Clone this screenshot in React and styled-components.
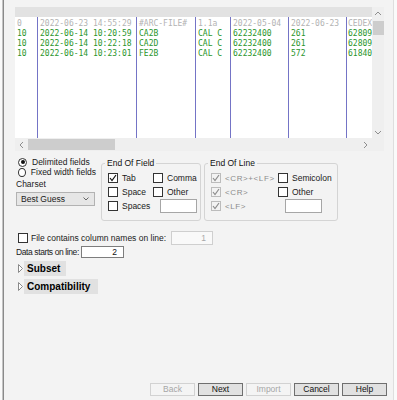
import React from "react";
import styled, { createGlobalStyle } from "styled-components";

const GlobalStyle = createGlobalStyle`
  html, body { margin: 0; padding: 0; background: #fafafa; }
  body {
    font-family: "Liberation Sans", Arial, sans-serif;
    font-size: 8.5px;
    color: #1a1a1a;
  }
  * { box-sizing: border-box; }
`;

// Dialog frame
const Window = styled.div`
  width: 392px;
  height: 400px;
  margin-left: 2px;
  border-left: 1px solid #c4c4c4;
  border-right: 1px solid #dedede;
  box-shadow: inset 1px 0 #8a8a8a;
  background: #f3f3f3;
  padding: 7px 9px 4px 12px;
  display: flex;
  flex-direction: column;
`;

// Preview grid
const Grid = styled.div`
  width: 369px;
  height: 144px;
  display: flex;
  flex-direction: column;
  flex: none;
`;

const GridTop = styled.div`
  display: flex;
  height: 131px;
`;

const Table = styled.div`
  flex: 1;
  display: flex;
  flex-direction: column;
  min-width: 0;
`;

const HeaderStrip = styled.div`
  height: 10px;
  background: #e2e2e2;
`;

const Columns = styled.div`
  flex: 1;
  display: flex;
  background: #fff;
  overflow: hidden;
`;

const Column = styled.div`
  width: ${(p) => (p.$w ? `${p.$w}px` : "auto")};
  flex: ${(p) => (p.$w ? "none" : "1")};
  min-width: 0;
  border-left: ${(p) => (p.$first ? "none" : "1px solid #7474c6")};
  padding: 2px 0 0 ${(p) => (p.$w ? 2 : 1)}px;
  overflow: hidden;
  font-family: "DejaVu Sans Mono", "Liberation Mono", monospace;
  font-size: 8px;
  line-height: 10px;
  white-space: nowrap;
`;

const Cell = styled.div`
  color: ${(p) => (p.$head ? "#b3b3b3" : "#2a952a")};
`;

const VScroll = styled.div`
  width: 12px;
  background: #efefef;
  display: flex;
  flex-direction: column;
  align-items: flex-end;
`;

const ArrowBox = styled.div`
  width: ${(p) => p.$w || 12}px;
  height: ${(p) => p.$h || 12}px;
  flex: none;
  display: flex;
  align-items: center;
  justify-content: center;
`;

const VThumb = styled.div`
  width: 11px;
  height: 14px;
  margin-top: 1px;
  background: #cdcdcd;
`;

const Fill = styled.div`
  flex: 1;
`;

const HScroll = styled.div`
  height: 13px;
  display: flex;
  align-items: center;
  background: #efefef;
`;

const HThumb = styled.div`
  width: 87px;
  height: 11px;
  background: #cdcdcd;
`;

const Corner = styled.div`
  width: 12px;
  align-self: stretch;
  background: #efefef;
`;

// Options
const OptionsRow = styled.div`
  display: flex;
  align-items: flex-start;
  margin: 6px 0 0 1px;
`;

const LeftCol = styled.div`
  width: 80px;
  display: flex;
  flex-direction: column;
`;

const RadioRow = styled.label`
  height: 10px;
  display: flex;
  align-items: center;
  gap: 5px;
  padding-left: 2px;
  white-space: nowrap;
`;

const Radio = styled.span`
  width: 9px;
  height: 9px;
  border: 1px solid #333;
  border-radius: 50%;
  background: #fff;
  display: flex;
  align-items: center;
  justify-content: center;
  &::after {
    content: "";
    width: 4px;
    height: 4px;
    border-radius: 50%;
    background: ${(p) => (p.$on ? "#111" : "transparent")};
  }
`;

const Caption = styled.div`
  margin-top: 2px;
  height: 10px;
  line-height: 10px;
`;

const Select = styled.div`
  margin-top: 3px;
  width: 79px;
  height: 14px;
  background: #e6e6e6;
  border: 1px solid #b2b2b2;
  display: flex;
  align-items: center;
  justify-content: space-between;
  padding: 0 5px 0 4px;
`;

const Group = styled.fieldset`
  width: ${(p) => p.$w}px;
  margin: 1px 0 0 ${(p) => p.$ml}px;
  padding: 3px 6px 7px 6px;
  border: 1px solid #d4d4d4;
  border-radius: 3px;
  min-width: 0;
`;

const Legend = styled.legend`
  padding: 0 2px;
  margin-left: -3px;
  line-height: 10px;
  color: #111;
`;

const CheckGrid = styled.div`
  display: grid;
  grid-template-columns: ${(p) => p.$col}px auto;
  grid-auto-rows: 14px;
`;

const CheckRow = styled.label`
  display: flex;
  align-items: center;
  gap: 4px;
  white-space: nowrap;
  color: ${(p) => (p.$off ? "#8c8c8c" : "inherit")};
`;

const Box = styled.span`
  width: 10px;
  height: 10px;
  flex: none;
  border: 1px solid ${(p) => (p.$off ? "#bcbcbc" : "#333")};
  background: ${(p) => (p.$off ? "#f3f3f3" : "#fff")};
  display: flex;
  align-items: center;
  justify-content: center;
`;

const Marker = styled.span`
  font-size: 8px;
  letter-spacing: 0.6px;
`;

const Field = styled.div`
  width: ${(p) => p.$w}px;
  height: ${(p) => p.$h || 14}px;
  margin-left: ${(p) => p.$ml || 0}px;
  flex: none;
  background: ${(p) => (p.$off ? "#f9f9f9" : "#fff")};
  border: 1px solid ${(p) => (p.$off ? "#cfcfcf" : p.$dark ? "#7d7d7d" : "#a6a6a6")};
  color: ${(p) => (p.$off ? "#a8a8a8" : "#111")};
  text-align: right;
  padding-right: 6px;
  line-height: ${(p) => (p.$h || 14) - 2}px;
  align-self: center;
`;

const LineRow = styled.div`
  display: flex;
  align-items: center;
  height: ${(p) => p.$h}px;
  margin: ${(p) => p.$mt}px 0 0 1px;
  padding-left: ${(p) => p.$pl || 0}px;
`;

const CheckLabel = styled.span`
  width: 137px;
  margin-left: 3px;
  white-space: nowrap;
`;

const TightLabel = styled.span`
  width: 65px;
  flex: none;
  white-space: nowrap;
  letter-spacing: -0.4px;
`;

const Disclosure = styled.div`
  display: flex;
  align-items: center;
  gap: 1px;
  margin: ${(p) => p.$mt}px 0 0 1px;
  padding-left: 2px;
`;

const Section = styled.div`
  width: ${(p) => p.$w}px;
  height: 15px;
  background: #e1e1e1;
  padding-left: 3px;
  font-size: 10px;
  font-weight: bold;
  line-height: 15px;
  color: #000;
`;

// Footer buttons
const Footer = styled.div`
  display: flex;
  justify-content: flex-end;
  gap: 3px;
  margin-right: -3px;
`;

const Button = styled.button`
  width: 45px;
  height: 13px;
  padding: 0;
  font-family: inherit;
  font-size: 8.5px;
  line-height: 11px;
  background: ${(p) => (p.disabled ? "#f4f4f4" : "#e1e1e1")};
  border: 1px solid ${(p) => (p.disabled ? "#d2d2d2" : "#6f6f6f")};
  color: ${(p) => (p.disabled ? "#a6a6a6" : "#111")};
`;

const Chevron = ({ dir }) => {
  const pts = {
    up: "1,4 4,1 7,4",
    down: "1,1 4,4 7,1",
    left: "4,1 1,4 4,7",
    right: "1,1 4,4 1,7",
  }[dir];
  const vertical = dir === "up" || dir === "down";
  return (
    <svg width={vertical ? 8 : 5} height={vertical ? 5 : 8} viewBox={vertical ? "0 0 8 5" : "0 0 5 8"}>
      <polyline points={pts} fill="none" stroke="#8e8e8e" strokeWidth="1" />
    </svg>
  );
};

const Tick = ({ color }) => (
  <svg width="8" height="8" viewBox="0 0 8 8">
    <polyline points="1,4 3,6.5 7,1" fill="none" stroke={color} strokeWidth="1.2" />
  </svg>
);

const Triangle = () => (
  <svg width="5" height="9" viewBox="0 0 5 9">
    <polygon points="0.5,0.5 4.5,4.5 0.5,8.5" fill="#fff" stroke="#8a8a8a" strokeWidth="1" />
  </svg>
);

const columns = [
  { w: 22, head: "0", rows: ["10", "10", "10"] },
  { w: 99, head: "2022-06-23 14:55:29", rows: ["2022-06-14 10:20:59", "2022-06-14 10:22:18", "2022-06-14 10:23:01"] },
  { w: 59, head: "#ARC-FILE#", rows: ["CA2B", "CA2D", "FE2B"] },
  { w: 35, head: "1.1a", rows: ["CAL C", "CAL C", "CAL C"] },
  { w: 58, head: "2022-05-04", rows: ["62232400", "62232400", "62232400"] },
  { w: 58, head: "2022-06-23", rows: ["261", "261", "572"] },
  { w: 0, head: "CEDEX", rows: ["62809", "62809", "61840"] },
];

function Check({ label, checked, off, marker }) {
  return (
    <CheckRow $off={off}>
      <Box $off={off}>{checked && <Tick color={off ? "#8c8c8c" : "#111"} />}</Box>
      {marker ? <Marker>{label}</Marker> : label}
    </CheckRow>
  );
}

export default function App() {
  return (
    <>
      <GlobalStyle />
      <Window>
        <Grid>
          <GridTop>
            <Table>
              <HeaderStrip />
              <Columns>
                {columns.map((c, i) => (
                  <Column key={i} $w={c.w} $first={i === 0}>
                    <Cell $head>{c.head}</Cell>
                    {c.rows.map((r, j) => (
                      <Cell key={j}>{r}</Cell>
                    ))}
                  </Column>
                ))}
              </Columns>
            </Table>
            <VScroll>
              <ArrowBox $h={13}>
                <Chevron dir="up" />
              </ArrowBox>
              <VThumb />
              <Fill />
              <ArrowBox $h={12}>
                <Chevron dir="down" />
              </ArrowBox>
            </VScroll>
          </GridTop>
          <HScroll>
            <ArrowBox $w={13} $h={13}>
              <Chevron dir="left" />
            </ArrowBox>
            <HThumb />
            <Fill />
            <ArrowBox $w={13} $h={13}>
              <Chevron dir="right" />
            </ArrowBox>
            <Corner />
          </HScroll>
        </Grid>

        <OptionsRow>
          <LeftCol>
            <RadioRow>
              <Radio $on />
              Delimited fields
            </RadioRow>
            <RadioRow>
              <Radio />
              Fixed width fields
            </RadioRow>
            <Caption>Charset</Caption>
            <Select>
              Best Guess
              <svg width="6" height="4" viewBox="0 0 6 4">
                <polyline points="0.5,0.5 3,3 5.5,0.5" fill="none" stroke="#666" strokeWidth="1" />
              </svg>
            </Select>
          </LeftCol>

          <Group $w={100} $ml={5}>
            <Legend>End Of Field</Legend>
            <CheckGrid $col={45}>
              <Check label="Tab" checked />
              <Check label="Comma" />
              <Check label="Space" />
              <Check label="Other" />
              <Check label="Spaces" />
              <Field $w={37} $ml={7} />
            </CheckGrid>
          </Group>

          <Group $w={134} $ml={3}>
            <Legend>End Of Line</Legend>
            <CheckGrid $col={67}>
              <Check label="<CR>+<LF>" checked off marker />
              <Check label="Semicolon" />
              <Check label="<CR>" checked off marker />
              <Check label="Other" />
              <Check label="<LF>" checked off marker />
              <Field $w={37} $ml={7} />
            </CheckGrid>
          </Group>
        </OptionsRow>

        <LineRow $h={14} $mt={10} $pl={2}>
          <Box />
          <CheckLabel>File contains column names on line:</CheckLabel>
          <Field $w={42} $ml={3} $off>1</Field>
        </LineRow>

        <LineRow $h={12} $mt={1}>
          <TightLabel>Data starts on line:</TightLabel>
          <Field $w={43} $h={12} $dark>2</Field>
        </LineRow>

        <Disclosure $mt={3}>
          <Triangle />
          <Section $w={42}>Subset</Section>
        </Disclosure>
        <Disclosure $mt={3}>
          <Triangle />
          <Section $w={74}>Compatibility</Section>
        </Disclosure>

        <Fill />

        <Footer>
          <Button disabled>Back</Button>
          <Button>Next</Button>
          <Button disabled>Import</Button>
          <Button>Cancel</Button>
          <Button>Help</Button>
        </Footer>
      </Window>
    </>
  );
}
